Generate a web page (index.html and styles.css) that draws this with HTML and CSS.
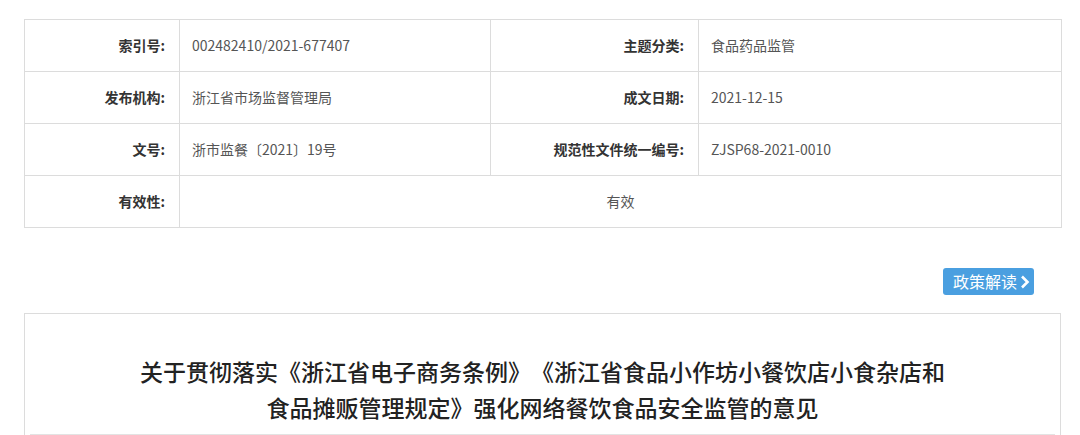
FILE: index.html
```html
<!DOCTYPE html>
<html lang="zh-CN">
<head>
<meta charset="utf-8">
<title>关于贯彻落实《浙江省电子商务条例》的意见</title>
<link rel="stylesheet" href="styles.css">
</head>
<body>
<div class="page">
  <table class="meta">
    <colgroup>
      <col class="c1"><col class="c2"><col class="c3"><col class="c4">
    </colgroup>
    <tr>
      <th>索引号:</th><td>002482410/2021-677407</td>
      <th>主题分类:</th><td>食品药品监管</td>
    </tr>
    <tr>
      <th>发布机构:</th><td>浙江省市场监督管理局</td>
      <th>成文日期:</th><td>2021-12-15</td>
    </tr>
    <tr>
      <th>文号:</th><td>浙市监餐〔2021〕19号</td>
      <th>规范性文件统一编号:</th><td>ZJSP68-2021-0010</td>
    </tr>
    <tr>
      <th>有效性:</th><td colspan="3" class="center">有效</td>
    </tr>
  </table>

  <div class="toolbar">
    <a class="btn" href="#">政策解读<svg class="chev" viewBox="0 0 10 14" width="10" height="14"><polyline points="2,1.5 7.5,7 2,12.5" fill="none" stroke="#fff" stroke-width="2.6"/></svg></a>
  </div>

  <div class="doc">
    <h1 class="title">关于贯彻落实《浙江省电子商务条例》《浙江省食品小作坊小餐饮店小食杂店和<br>食品摊贩管理规定》强化网络餐饮食品安全监管的意见</h1>
    <div class="rule"></div>
    <div class="body-space"></div>
  </div>
</div>
</body>
</html>
```

FILE: styles.css
```css
html, body {
  margin: 0;
  padding: 0;
  background: #fff;
}
body {
  font-family: "Noto Sans CJK SC", "Liberation Sans", sans-serif;
  color: #333;
  text-spacing-trim: space-all;
}
.page {
  padding: 19px 19px 0 24px;
}
.meta {
  width: 1037px;
  border-collapse: collapse;
  table-layout: fixed;
  border: 1px solid #dcdcdc;
}
.meta .c1 { width: 155px; }
.meta .c2 { width: 311px; }
.meta .c3 { width: 208px; }
.meta .c4 { width: 363px; }
.meta tr { height: 52px; }
.meta th, .meta td {
  border: 1px solid #dcdcdc;
  font-size: 14px;
  line-height: 20px;
  padding: 0 0 2px;
  vertical-align: middle;
}
.meta th {
  text-align: right;
  padding-right: 14px;
  font-weight: 700;
  color: #333;
}
.meta td {
  text-align: left;
  padding-left: 12px;
  color: #555;
}
.meta td.center {
  text-align: center;
  padding-left: 0;
}
.toolbar {
  width: 1037px;
  display: flex;
  justify-content: flex-end;
  margin-top: 40px;
}
.btn {
  display: flex;
  align-items: center;
  gap: 3px;
  height: 27px;
  padding: 0 4px 0 10px;
  margin-right: 27px;
  background: #4a9fe0;
  border-radius: 3px;
  color: #fff;
  font-size: 16px;
  text-decoration: none;
  line-height: 27px;
}
.chev { display: block; }
.doc {
  width: 1035px;
  margin-top: 18px;
  border: 1px solid #dcdcdc;
  border-bottom: none;
}
.title {
  margin: 0;
  padding-top: 39px;
  font-size: 23px;
  line-height: 36px;
  font-weight: 500;
  color: #222;
  text-align: center;
}
.rule {
  margin: 9px 5px 0;
  height: 2px;
  background: #e3e3e3;
}
.body-space {
  height: 40px;
}
```
